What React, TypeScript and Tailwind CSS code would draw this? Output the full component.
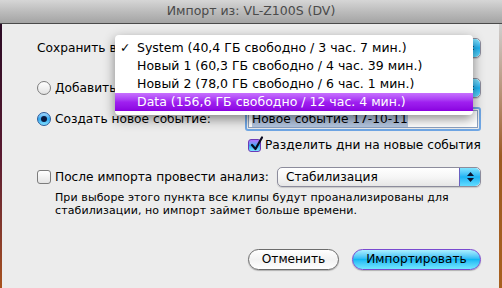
import React from "react";

const font = { fontFamily: '"DejaVu Sans", "Liberation Sans", sans-serif' };

function Radio({ checked }: { checked?: boolean }) {
  return checked ? (
    <div className="w-[14px] h-[14px] rounded-full border border-[#2a5a9a] bg-gradient-to-b from-[#9fd8ff] via-[#2fa8f0] to-[#7fe0ff] flex items-center justify-center shrink-0">
      <div className="w-[6px] h-[6px] rounded-full bg-[#0a1a40]" />
    </div>
  ) : (
    <div className="w-[14px] h-[14px] rounded-full border border-[#7c7c7c] bg-gradient-to-b from-[#ffffff] to-[#e2e2e2] shrink-0" />
  );
}

function Checkbox({ checked }: { checked?: boolean }) {
  return checked ? (
    <div className="relative w-[13px] h-[13px] rounded-[3px] border border-[#6a3ab8] bg-gradient-to-b from-[#b070ff] via-[#2fa8f0] to-[#7fe0ff] shrink-0">
      <svg className="absolute left-[1px] top-[-4px]" width="14" height="16" viewBox="0 0 14 16">
        <path d="M2 9 L5.5 13 L12 1.5" fill="none" stroke="#0a0a20" strokeWidth="2.2" strokeLinecap="round" strokeLinejoin="round" />
      </svg>
    </div>
  ) : (
    <div className="w-[14px] h-[14px] rounded-[3px] border border-[#7c7c7c] bg-gradient-to-b from-[#ffffff] to-[#e4e4e4] shrink-0" />
  );
}

function ArrowCap() {
  return (
    <div className="w-[21px] self-stretch rounded-r-[5px] border-l border-[#6a60c0] bg-gradient-to-b from-[#7fe4ff] via-[#18b4f4] to-[#60dcff] flex flex-col items-center justify-center gap-[2px]">
      <svg width="7" height="4" viewBox="0 0 7 4"><path d="M3.5 0 L7 4 L0 4 Z" fill="#0c1430" /></svg>
      <svg width="7" height="4" viewBox="0 0 7 4"><path d="M0 0 L7 0 L3.5 4 Z" fill="#0c1430" /></svg>
    </div>
  );
}

function Popup({ text, className }: { text?: string; className: string }) {
  return (
    <div className={`h-[20px] shrink-0 flex rounded-[5px] border border-[#8c8c9c] bg-gradient-to-b from-[#ffffff] via-[#f6f6f6] to-[#e6e6e6] shadow-[0_1px_1px_rgba(0,0,0,0.15)] ${className}`}>
      <div className="flex-1 flex items-center pl-[8px] text-black whitespace-nowrap">{text}</div>
      <ArrowCap />
    </div>
  );
}

export default function App() {
  return (
    <div className="w-[502px] h-[288px] overflow-hidden relative bg-[#ececec] flex flex-col" style={font}>
      {/* title bar */}
      <div className="h-[24px] shrink-0 bg-gradient-to-b from-[#d6d6d6] via-[#bcbcbc] to-[#a4a4a4] border-b border-[#4a4a4a] flex items-center justify-center">
        <span className="text-[12.5px] text-[#4a4a4a] leading-none">Импорт из: VL-Z100S (DV)</span>
      </div>
      <div className="flex-1 flex min-w-0">
        <div className="w-[2px] shrink-0 bg-gradient-to-b from-[#2a0a24] via-[#5a1a30] to-[#a8521c]" />
        <div className="flex-1 min-w-0 flex flex-col pl-[35px] pr-[18px] text-[12.2px] text-black whitespace-nowrap">
          {/* row 1 */}
          <div className="mt-[14px] h-[20px] flex items-center">
            <span>Сохранить в:</span>
            <Popup className="ml-auto w-[352px]" />
          </div>
          {/* row 2 */}
          <div className="mt-[20px] h-[20px] flex items-center">
            <Radio />
            <span className="ml-[4px] mt-[1px]">Добавить к существующему событию:</span>
            <Popup className="ml-auto w-[170px]" />
          </div>
          {/* row 3 */}
          <div className="mt-[9px] h-[24px] flex items-center">
            <Radio checked />
            <span className="ml-[4px]">Создать новое событие:</span>
            <div className="ml-auto shrink-0 w-[236px] h-[24px] rounded-[3px] border-[2px] border-[#6fa6e4] p-[1px]">
              <div className="w-full h-full bg-white border border-[#8aa0c0] flex items-center pl-[3px]">
                <span className="bg-[#b4c6e0] leading-[16px]">Новое событие 17-10-11</span>
              </div>
            </div>
          </div>
          {/* row 4 */}
          <div className="mt-[6px] h-[16px] flex items-center pl-[211px]">
            <Checkbox checked />
            <span className="ml-[4px]">Разделить дни на новые события</span>
          </div>
          {/* row 5 */}
          <div className="mt-[14px] h-[20px] flex items-center">
            <Checkbox />
            <span className="ml-[4px]">После импорта провести анализ:</span>
            <Popup className="ml-auto w-[204px]" text="Стабилизация" />
          </div>
          {/* help */}
          <div className="mt-[4px] pl-[18px] text-[11px] leading-[13px] tracking-[0.1px]">
            <div>При выборе этого пункта все клипы будут проанализированы для</div>
            <div>стабилизации, но импорт займет больше времени.</div>
          </div>
          {/* buttons */}
          <div className="mt-[32px] flex justify-end gap-[13px]">
            <div className="w-[91px] h-[21px] rounded-full border border-[#6c6c6c] bg-gradient-to-b from-[#ffffff] via-[#f2f2f2] to-[#ffffff] shadow-[0_1px_1px_rgba(0,0,0,0.25)] flex items-center justify-center">
              Отменить
            </div>
            <div className="w-[129px] h-[21px] rounded-full border border-[#7a4ad0] bg-gradient-to-b from-[#a8f0ff] via-[#10b8f4] to-[#70e8ff] shadow-[0_1px_1px_rgba(0,0,0,0.25)] flex items-center justify-center">
              Импортировать
            </div>
          </div>
        </div>
        <div className="w-[3px] shrink-0 bg-gradient-to-b from-[#cfcfcf] via-[#9c5a22] to-[#a8601e]" />
      </div>

      {/* open menu */}
      <div className="absolute left-[115px] top-[35px] w-[358px] py-[4px] bg-white rounded-[4px] shadow-[0_4px_12px_rgba(0,0,0,0.45)] text-[12.5px] text-black whitespace-nowrap">
        <div className="h-[18px] flex items-center">
          <span className="w-[22px] pl-[5px]">✓</span>
          <span>System (40,4 ГБ свободно / 3 час. 7 мин.)</span>
        </div>
        <div className="h-[18px] flex items-center pl-[22px]">Новый 1 (60,3 ГБ свободно / 4 час. 39 мин.)</div>
        <div className="h-[18px] flex items-center pl-[22px]">Новый 2 (78,0 ГБ свободно / 6 час. 1 мин.)</div>
        <div className="h-[18px] flex items-center pl-[22px] text-white bg-gradient-to-b from-[#c870ff] via-[#a020f0] to-[#8a00e0]">Data (156,6 ГБ свободно / 12 час. 4 мин.)</div>
      </div>
    </div>
  );
}
